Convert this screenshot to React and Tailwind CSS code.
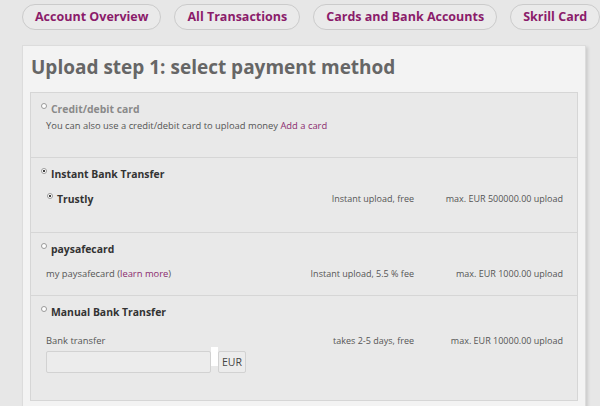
import React from 'react';

const tabs = ['Account Overview', 'All Transactions', 'Cards and Bank Accounts', 'Skrill Card'];

const Radio = ({ checked, className = '' }) => (
  <span className={`inline-flex items-center justify-center w-[6px] h-[6px] rounded-full bg-white border border-[#9a9a9a] ${className}`}>
    {checked && <span className="w-[2px] h-[2px] rounded-full bg-black" />}
  </span>
);

const Cols = ({ a, b }) => (
  <>
    <div className="text-right whitespace-nowrap text-[9px]">{a}</div>
    <div className="w-[149px] text-right whitespace-nowrap text-[9px]">{b}</div>
  </>
);

const App = () => {
  return (
    <div
      className="w-[600px] h-[406px] overflow-hidden bg-[#e7e7e7]"
      style={{ fontFamily: '"Open Sans", "Liberation Sans", sans-serif' }}
    >
      <div className="flex gap-[13px] pl-[22px] pt-[4px]">
        {tabs.map((t) => (
          <div
            key={t}
            className="h-[26px] px-[12px] flex items-center rounded-full border border-[#cbcbcb] bg-[#eaeaea] text-[12.5px] font-bold text-[#8b1c6a] whitespace-nowrap"
          >
            {t}
          </div>
        ))}
      </div>

      <div className="ml-[22px] mt-[15px] w-[564px] h-[380px] bg-[#f3f3f3] border border-[#dcdcdc] shadow-[2px_2px_3px_rgba(0,0,0,0.12)] px-[7px] pt-[8px]">
        <h1 className="text-[19px] leading-[27px] font-bold text-[#666666] pl-[1px]">
          Upload step 1: select payment method
        </h1>

        <div className="mt-[11px] bg-[#e9e9e9] border border-[#d6d6d6] text-[9.4px] text-[#555555]">
          <div className="h-[65px] border-b border-[#d6d6d6] pt-[8px]">
            <div className="flex items-start pl-[10px]">
              <Radio className="mt-[2px]" />
              <span className="ml-[4px] text-[10.4px] font-bold text-[#8a8a8a] leading-[16px]">Credit/debit card</span>
            </div>
            <div className="pl-[15px] mt-[2px] leading-[14px]">
              You can also use a credit/debit card to upload money{' '}
              <span className="text-[#8b2c6f]">Add a card</span>
            </div>
          </div>

          <div className="h-[75px] border-b border-[#d6d6d6] pt-[8px]">
            <div className="flex items-start pl-[10px]">
              <Radio checked className="mt-[2px]" />
              <span className="ml-[4px] text-[10.4px] font-bold text-[#333333] leading-[16px]">Instant Bank Transfer</span>
            </div>
            <div className="flex items-center mt-[9px] pr-[14px]">
              <div className="flex-1 flex items-start pl-[16px]">
                <Radio checked className="mt-[2px]" />
                <span className="ml-[4px] text-[10.4px] font-bold text-[#333333] leading-[16px]">Trustly</span>
              </div>
              <Cols a="Instant upload, free" b="max. EUR 500000.00 upload" />
            </div>
          </div>

          <div className="h-[63px] border-b border-[#d6d6d6] pt-[8px]">
            <div className="flex items-start pl-[10px]">
              <Radio className="mt-[2px]" />
              <span className="ml-[4px] text-[10.4px] font-bold text-[#333333] leading-[16px]">paysafecard</span>
            </div>
            <div className="flex items-center mt-[10px] pr-[14px] leading-[14px]">
              <div className="flex-1 pl-[15px]">
                my paysafecard (<span className="text-[#8b2c6f]">learn more</span>)
              </div>
              <Cols a="Instant upload, 5.5 % fee" b="max. EUR 1000.00 upload" />
            </div>
          </div>

          <div className="h-[104px] pt-[8px]">
            <div className="flex items-start pl-[10px]">
              <Radio className="mt-[2px]" />
              <span className="ml-[4px] text-[10.4px] font-bold text-[#333333] leading-[16px]">Manual Bank Transfer</span>
            </div>
            <div className="flex items-start mt-[14px] pr-[14px] leading-[14px]">
              <div className="flex-1 pl-[15px]">
                <div>Bank transfer</div>
                <div className="flex items-start mt-[3px]">
                  <div className="w-[165px] h-[22px] bg-[#ececec] border border-[#d2d2d2] rounded-[2px]" />
                  <div className="w-[7px] h-[19px] -mt-[4px] bg-white" />
                  <div className="h-[22px] px-[3px] flex items-center border border-[#d2d2d2] rounded-[2px] bg-[#ececec] text-[10.5px] text-[#444444]">
                    EUR
                  </div>
                </div>
              </div>
              <Cols a="takes 2-5 days, free" b="max. EUR 10000.00 upload" />
            </div>
          </div>
        </div>
      </div>
    </div>
  );
};

export default App;
